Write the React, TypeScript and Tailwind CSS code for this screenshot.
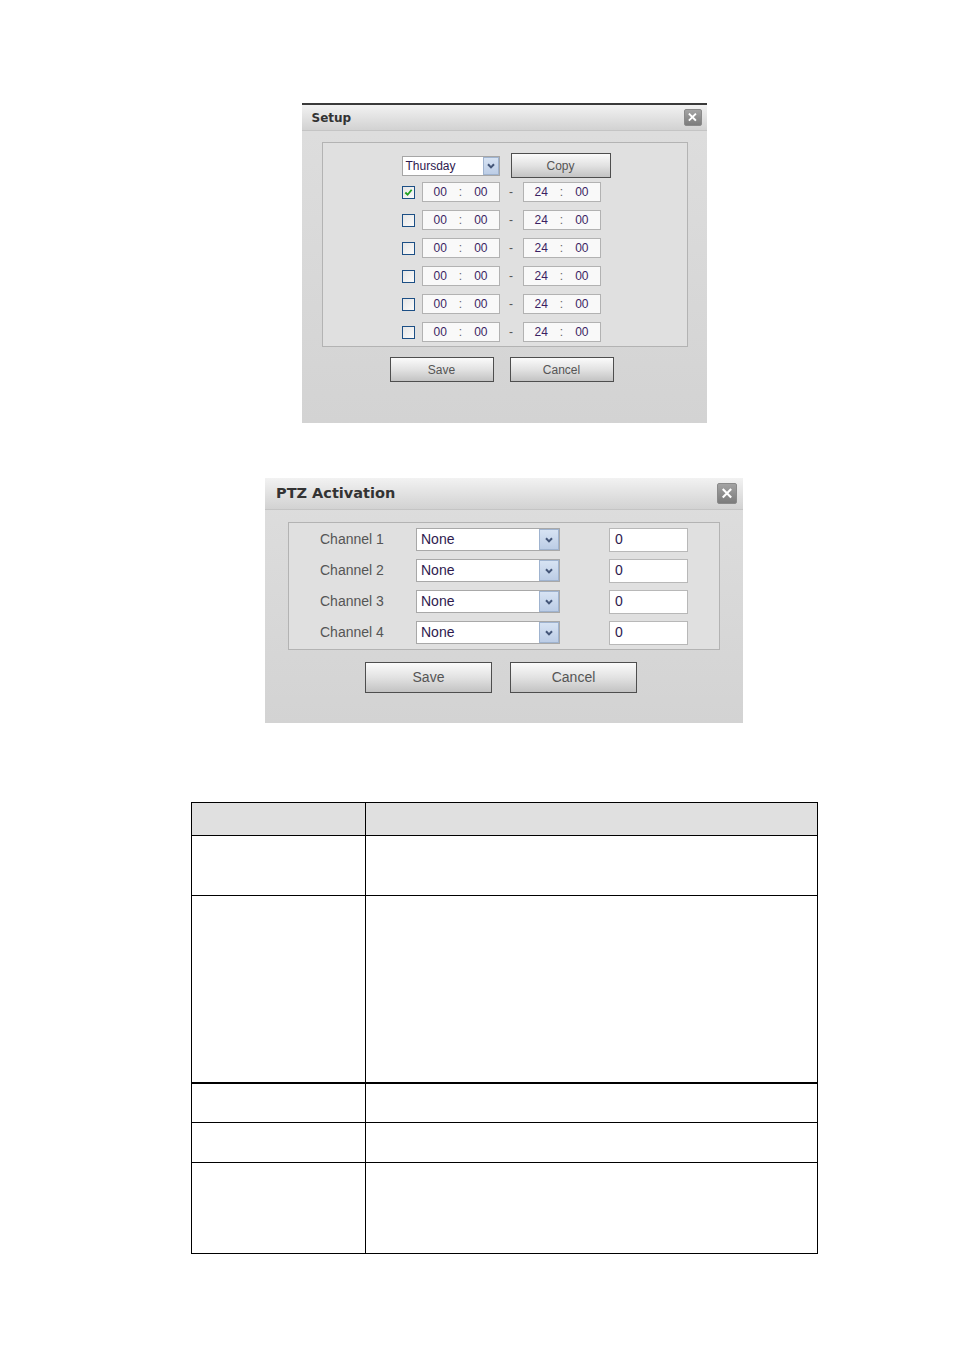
import React from 'react';

const ui = { fontFamily: '"Liberation Sans", Arial, sans-serif' };
const title = { fontFamily: '"DejaVu Sans", Verdana, sans-serif' };

const CloseBtn = ({ size }: { size: string }) => (
  <div className={`${size} flex items-center justify-center rounded-[2px] bg-gradient-to-b from-[#a3a3a3] to-[#7c7c7c] border border-[#8a8a8a]`}>
    <svg viewBox="0 0 10 10" className="w-[55%] h-[55%]">
      <path d="M1.5 1.5 L8.5 8.5 M8.5 1.5 L1.5 8.5" stroke="#ffffff" strokeWidth="2.2" strokeLinecap="square" />
    </svg>
  </div>
);

const Arrow = ({ w }: { w: string }) => (
  <div className={`${w} h-full flex items-center justify-center bg-gradient-to-b from-[#d7e3f3] to-[#bccde6] border border-[#9fb3cf]`}>
    <svg viewBox="0 0 10 10" className="w-[10px] h-[10px]">
      <path d="M2 3.2 L5 6.4 L8 3.2" stroke="#445678" strokeWidth="2" fill="none" />
    </svg>
  </div>
);

const GrayButton = ({ label, cls }: { label: string; cls: string }) => (
  <div className={`${cls} flex items-center justify-center border border-[#4e4e4e] bg-gradient-to-b from-[#fbfbfb] via-[#e2e2e2] to-[#c3c3c3] text-[#555]`}>
    {label}
  </div>
);

const TimeBox = ({ a, b }: { a: string; b: string }) => (
  <div className="w-[78px] h-[20px] flex items-center justify-center gap-[12px] bg-[#f9f9f9] border border-[#b2b2b2] text-[12px] text-[#3b1f63]">
    <span>{a}</span>
    <span className="text-[#666]">:</span>
    <span>{b}</span>
  </div>
);

const Check = ({ on }: { on: boolean }) => (
  <div className="w-[13px] h-[13px] border border-[#1c4f85] bg-gradient-to-br from-[#e6e6e6] to-[#fafafa] flex items-center justify-center">
    {on && (
      <svg viewBox="0 0 10 10" className="w-[9px] h-[9px]">
        <path d="M1.5 5 L4 7.5 L8.5 2" stroke="#21a121" strokeWidth="2" fill="none" />
      </svg>
    )}
  </div>
);

function SetupDialog() {
  const rows = [true, false, false, false, false, false];
  return (
    <div className="w-[405px] h-[320px] border-t-2 border-[#3a3a3a] bg-gradient-to-b from-[#dedede] to-[#d3d3d3]" style={ui}>
      <div className="h-[26px] flex items-center justify-between pl-[10px] pr-[5px] bg-gradient-to-b from-[#f2f2f2] to-[#d2d2d2] border-b border-[#c4c4c4]">
        <span className="text-[12px] font-bold text-[#333]" style={title}>Setup</span>
        <CloseBtn size="w-[18px] h-[17px]" />
      </div>
      <div className="mt-[11px] ml-[20px] w-[366px] h-[205px] border border-[#b3b3b3] bg-[#e0e0e0] pl-[79px] pt-[10px]">
        <div className="flex items-center h-[25px]">
          <div className="w-[98px] h-[20px] flex items-center bg-white border border-[#a6a6a6]">
            <span className="flex-1 pl-[3px] text-[12px] text-[#2e1a4e]">Thursday</span>
            <Arrow w="w-[16px]" />
          </div>
          <GrayButton label="Copy" cls="ml-[11px] w-[100px] h-[25px] text-[12px]" />
        </div>
        {rows.map((on, i) => (
          <div key={i} className="flex items-center h-[28px]">
            <Check on={on} />
            <div className="ml-[7px]">
              <TimeBox a="00" b="00" />
            </div>
            <span className="w-[23px] text-center text-[12px] text-[#555]">-</span>
            <TimeBox a="24" b="00" />
          </div>
        ))}
      </div>
      <div className="flex gap-[16px] pl-[88px] mt-[10px] text-[12px]">
        <GrayButton label="Save" cls="w-[104px] h-[25px]" />
        <GrayButton label="Cancel" cls="w-[104px] h-[25px]" />
      </div>
    </div>
  );
}

function PtzDialog() {
  return (
    <div className="w-[478px] h-[245px] bg-gradient-to-b from-[#dedede] to-[#d3d3d3]" style={ui}>
      <div className="h-[32px] flex items-center justify-between pl-[11px] pr-[6px] bg-gradient-to-b from-[#f2f2f2] to-[#d2d2d2] border-b border-[#c4c4c4]">
        <span className="text-[14.5px] font-bold text-[#333]" style={title}>PTZ Activation</span>
        <CloseBtn size="w-[20px] h-[21px]" />
      </div>
      <div className="mt-[12px] ml-[23px] w-[432px] h-[128px] border border-[#b3b3b3] bg-[#e0e0e0] pt-[1px]">
        {[1, 2, 3, 4].map((n) => (
          <div key={n} className="flex items-center h-[31px] pl-[31px]">
            <span className="w-[96px] text-[14px] text-[#555]">Channel {n}</span>
            <div className="w-[144px] h-[23px] flex items-center bg-white border border-[#a8a8a8]">
              <span className="flex-1 pl-[4px] text-[14px] text-[#2e1a4e]">None</span>
              <Arrow w="w-[20px]" />
            </div>
            <div className="ml-[49px] w-[79px] h-[24px] flex items-center pl-[5px] bg-white border border-[#b8b8b8] text-[14px] text-[#2e1a4e]">
              0
            </div>
          </div>
        ))}
      </div>
      <div className="flex gap-[18px] pl-[100px] mt-[12px] text-[14px]">
        <GrayButton label="Save" cls="w-[127px] h-[31px]" />
        <GrayButton label="Cancel" cls="w-[127px] h-[31px]" />
      </div>
    </div>
  );
}

function InfoTable() {
  const rows = ['h-[60px]', 'h-[187px]', 'h-[40px]', 'h-[40px]', 'h-[91px]'];
  return (
    <table className="w-[627px] border-collapse border border-black" style={ui}>
      <tbody>
        <tr className="h-[33px] bg-[#e0e0e0]">
          <td className="w-[174px] border border-black" />
          <td className="border border-black" />
        </tr>
        {rows.map((h, i) => (
          <tr key={i} className={h}>
            <td className={`border border-black ${i === 2 ? 'border-t-2' : ''}`} />
            <td className={`border border-black ${i === 2 ? 'border-t-2' : ''}`} />
          </tr>
        ))}
      </tbody>
    </table>
  );
}

export default function App() {
  return (
    <div className="w-[954px] min-h-[1350px] bg-white pl-[54px] pt-[103px] flex flex-col items-center">
      <SetupDialog />
      <div className="mt-[55px]">
        <PtzDialog />
      </div>
      <div className="mt-[79px]">
        <InfoTable />
      </div>
    </div>
  );
}
